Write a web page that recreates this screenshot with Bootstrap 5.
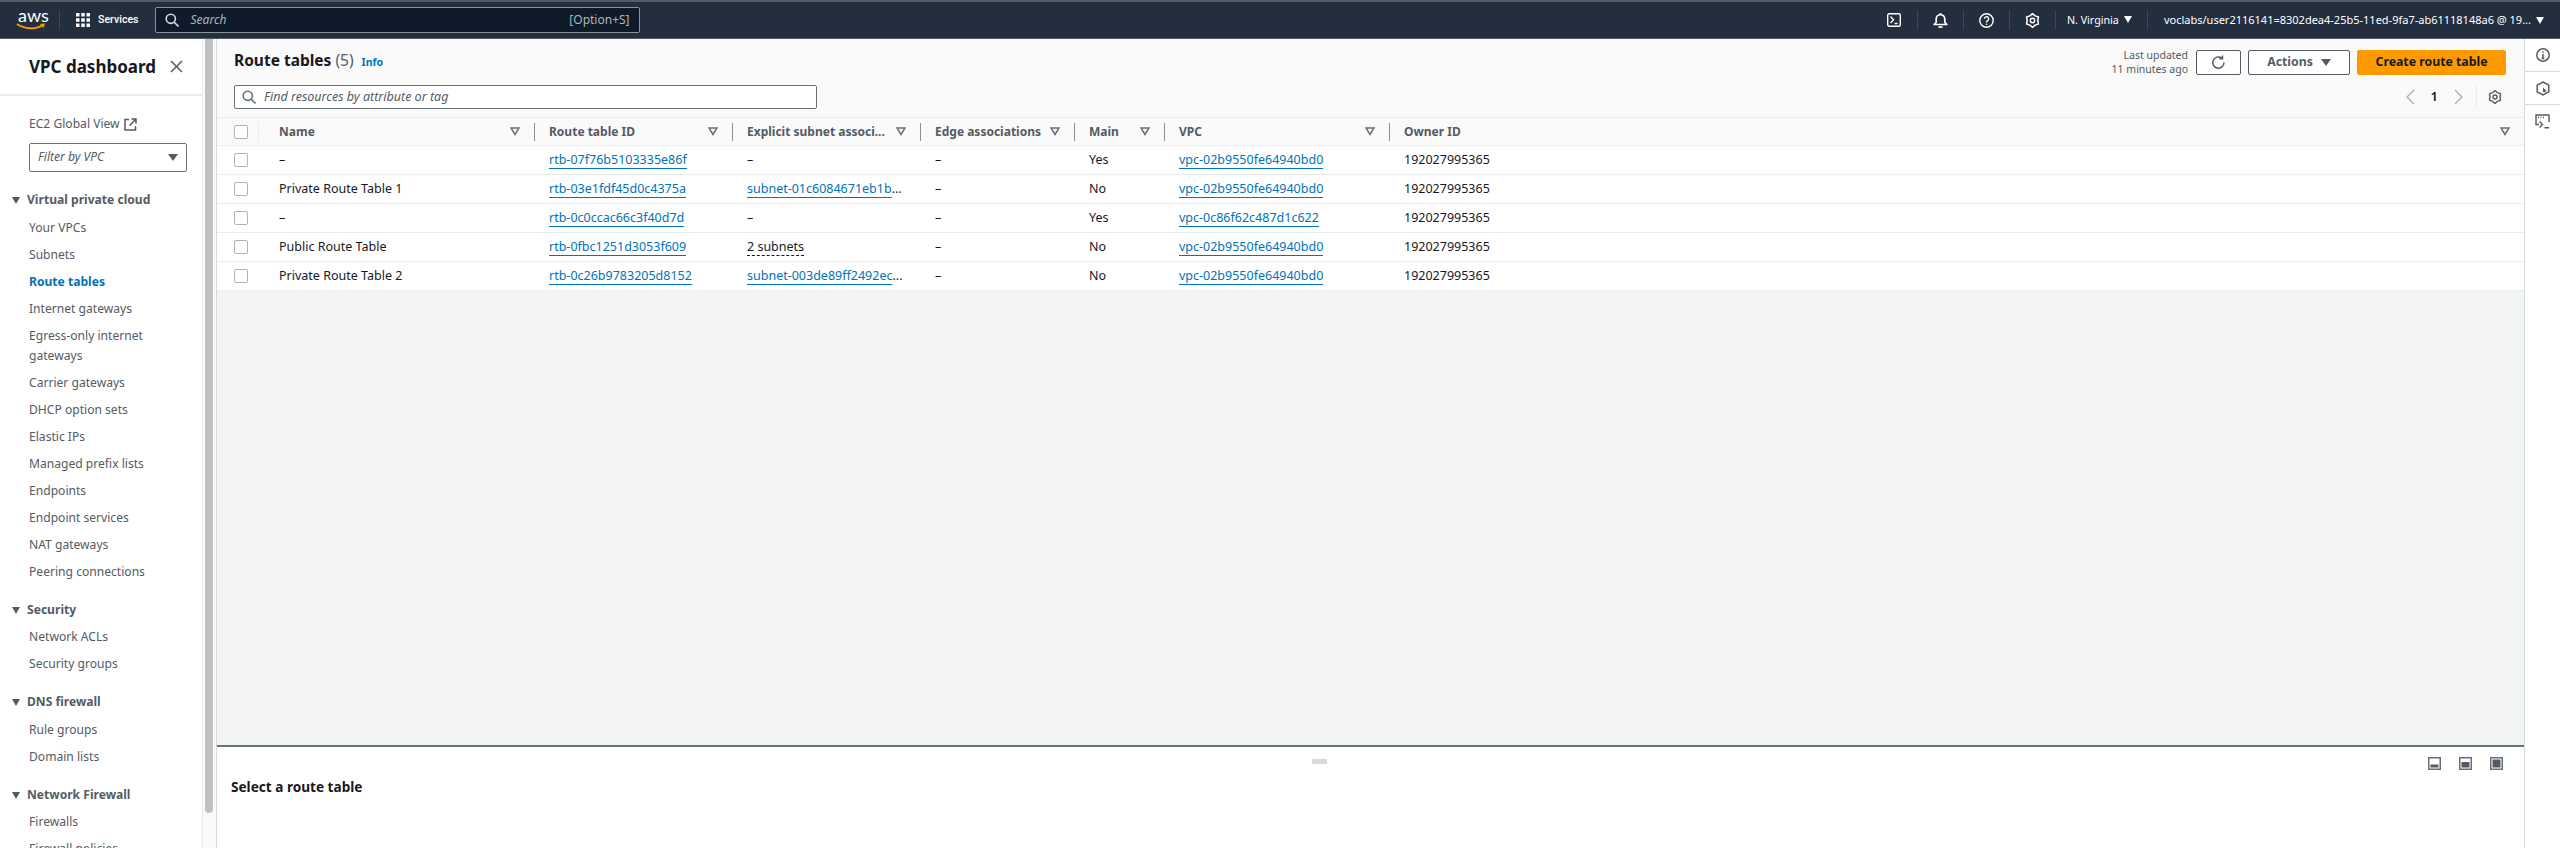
<!DOCTYPE html>
<html lang="en">
<head>
    <meta charset="UTF-8">
    <meta name="viewport" content="width=device-width, initial-scale=1.0">
    <title>Route tables | VPC Console</title>
    <link href="https://cdn.jsdelivr.net/npm/bootstrap@5.3.0/dist/css/bootstrap.min.css" rel="stylesheet">
    <style>
        html, body {
            height: 848px;
            overflow: hidden;
        }
        body {
            font-family: "Noto Sans", "Liberation Sans", sans-serif;
            font-size: 12.5px;
            color: #16191f;
            background: #fff;
        }
        /* top bar */
        .topbar {
            height: 39px;
            background: #232f3e;
            border-top: 2px solid #545b64;
            border-bottom: 1px solid #545b64;
            color: #fff;
            flex: none;
        }
        .aws-logo {
            width: 30px;
            margin: 0 13px 0 16px;
            flex: none;
        }
        .aws-word {
            font: 400 18px/13px Lato, sans-serif;
            display: block;
            margin-left: 2px;
            height: 14px;
        }
        .bar-sep {
            width: 1px;
            height: 20px;
            background: #414750;
            flex: none;
        }
        .services {
            font-family: Roboto, sans-serif;
            font-size: 10.6px;
            font-weight: 500;
            margin-left: 8px;
        }
        .top-search {
            width: 485px;
            height: 26px;
            margin-left: 16px;
            background: #0f1b2a;
            border: 1px solid #879596;
            border-radius: 2px;
            padding: 0 9px;
            color: #aab7b8;
            font-size: 12px;
        }
        .top-right {
            margin-left: auto;
        }
        .top-icon {
            width: 45px;
            display: flex;
            justify-content: center;
        }
        .region {
            font-size: 10.7px;
            width: 91px;
            padding-left: 11px;
        }
        .account {
            font-size: 11px;
            padding: 0 16px;
            white-space: nowrap;
        }
        .mini-caret {
            display: inline-block;
            border-left: 4px solid transparent;
            border-right: 4px solid transparent;
            border-top: 7px solid currentColor;
            margin-left: 5px;
        }
        .big-caret {
            border-left-width: 5px;
            border-right-width: 5px;
        }
        /* shell */
        .shell {
            height: 809px;
            min-height: 0;
        }
        .side-nav {
            width: 203px;
            flex: none;
            overflow: hidden;
            border-right: 1px solid #eaeded;
            color: #545b64;
            font-size: 12.1px;
        }
        .side-head {
            height: 57px;
            padding: 0 19px 0 29px;
            border-bottom: 2px solid #eaeded;
            font-size: 17px;
            font-weight: 700;
            color: #16191f;
        }
        .ec2-link {
            margin: 18px 0 0 29px;
            line-height: 20px;
        }
        .vpc-filter {
            width: 158px;
            height: 29px;
            margin: 9px 0 0 29px;
            border: 1px solid #687078;
            border-radius: 2px;
            padding: 0 8px;
            font-style: italic;
            color: #545b64;
        }
        .nav-group {
            margin-top: 18px;
        }
        .nav-group + .nav-group {
            margin-top: 14.5px;
        }
        .nav-title {
            font-weight: 700;
            line-height: 20px;
            padding-left: 12px;
            margin-bottom: 4px;
        }
        .nav-title .mini-caret {
            border-left-width: 4.5px;
            border-right-width: 4.5px;
            margin: 0 7px 0 0;
        }
        .nav-item-link {
            display: block;
            padding: 3.5px 10px 3.5px 29px;
            line-height: 20px;
            color: #545b64;
            text-decoration: none;
        }
        .nav-item-link.active-item {
            color: #0073bb;
            font-weight: 700;
        }
        .scroll-gutter {
            width: 13px;
            flex: none;
            background: #fafafa;
            padding: 0 3px 0 2px;
        }
        .scroll-thumb {
            height: 774px;
            background: #c1c1c1;
            border-radius: 0 0 4px 4px;
        }
        .main-area {
            min-width: 0;
            border-left: 1px solid #d5dbdb;
        }
        .table-zone {
            height: 708px;
            flex: none;
            background: #f2f3f3;
            border-bottom: 2px solid #687078;
        }
        .res-head {
            height: 78px;
            background: #fafafa;
            padding: 10px 18px 0 17px;
        }
        .res-title {
            font-size: 15.5px;
            font-weight: 700;
            line-height: 22px;
            margin: 0;
        }
        .res-title .count {
            font-weight: 400;
            color: #545b64;
        }
        .info-link {
            font-size: 10.5px;
            font-weight: 700;
            color: #0073bb;
            margin-left: 8px;
            text-decoration: none;
        }
        .find-box {
            width: 583px;
            height: 24px;
            margin-top: 12px;
            background: #fff;
            border: 1px solid #687078;
            border-radius: 2px;
            padding: 0 7px;
            font-style: italic;
            color: #545b64;
        }
        .updated {
            font-size: 10.5px;
            line-height: 14px;
            color: #545b64;
            text-align: right;
            margin-right: 8px;
        }
        .head-actions {
            margin-top: -1px;
        }
        .aws-btn {
            height: 25px;
            border: 1px solid #545b64;
            border-radius: 2px;
            background: #fff;
            color: #545b64;
            font-weight: 700;
            font-size: 12.3px;
            display: flex;
            align-items: center;
            justify-content: center;
            padding: 0;
        }
        .btn-refresh {
            width: 45px;
        }
        .btn-actions {
            width: 102px;
            margin-left: 7px;
        }
        .btn-create {
            width: 149px;
            margin-left: 7px;
            background: #f90;
            border-color: #f90;
            color: #16191f;
        }
        .pager {
            height: 24px;
            margin-top: 9px;
            font-size: 13px;
            font-weight: 600;
        }
        .pager-sep {
            width: 1px;
            height: 24px;
            background: #eaeded;
            margin: 0 11px 0 13px;
        }
        .route-table {
            table-layout: fixed;
            width: 2307px;
            margin: 0;
            border-collapse: collapse;
            color: #16191f;
        }
        .route-table th {
            height: 28px;
            padding: 0;
            background: #fafafa;
            color: #545b64;
            font-size: 12px;
            font-weight: 700;
            border-top: 1px solid #eaeded;
            border-bottom: 1px solid #eaeded;
            vertical-align: middle;
        }
        .route-table td {
            height: 29px;
            padding: 0 0 0 15px;
            border-bottom: 1px solid #eaeded;
            vertical-align: middle;
            background: #fff;
            white-space: nowrap;
            overflow: hidden;
        }
        .route-table .check-col {
            padding: 0 0 0 17px;
        }
        .route-table .name-td {
            padding-left: 21px;
        }
        .head-cell {
            height: 18px;
            padding: 0 14px 0 14px;
            border-left: 1px solid #879596;
        }
        .head-cell.first-cell {
            border-left-color: #eaeded;
            padding-left: 20px;
        }
        .filter-mark {
            margin-left: auto;
            flex: none;
        }
        .fake-check {
            display: block;
            width: 14px;
            height: 14px;
            background: #fff;
            border: 1px solid #aab7b8;
            border-radius: 2px;
        }
        .res-link {
            color: #0073bb;
            text-decoration: none;
            border-bottom: 1px solid #0073bb;
        }
        .dash-under {
            border-bottom: 1px dashed #16191f;
        }
        .split-handle {
            height: 5px;
            width: 15px;
            background: #d5dbdb;
            position: absolute;
            left: 1095px;
            top: 12px;
        }
        .detail-zone {
            position: relative;
            padding: 10px 21px 0 14px;
        }
        .detail-icons {
            gap: 18px;
        }
        .detail-title {
            font-size: 13.6px;
            font-weight: 700;
            margin-top: 7px;
        }
        .right-rail {
            width: 36px;
            flex: none;
            border-left: 1px solid #d5dbdb;
            background: #fff;
        }
        .rail-btn {
            height: 33px;
            border-bottom: 1px solid #d5dbdb;
        }
        .rail-btn:last-child {
            border-bottom: 0;
        }
    </style>
</head>
<body class="d-flex flex-column">
<header class="topbar d-flex align-items-center">
    <div class="aws-logo">
        <span class="aws-word">aws</span>
        <svg width="30" height="8" viewBox="0 0 30 8" class="d-block"><path d="M1 1c7 5 19 6 26 1" fill="none" stroke="#f90" stroke-width="1.800"/><path d="M24 1l5-.5-1.500 4.500z" fill="#f90"/></svg>
    </div>
    <div class="bar-sep"></div>
    <svg width="14" height="14" viewBox="0 0 14 14" class="ms-3 flex-shrink-0" fill="#fff"><rect width="3.500" height="3.500"/><rect x="5.250" width="3.500" height="3.500"/><rect x="10.500" width="3.500" height="3.500"/><rect y="5.250" width="3.500" height="3.500"/><rect x="5.250" y="5.250" width="3.500" height="3.500"/><rect x="10.500" y="5.250" width="3.500" height="3.500"/><rect y="10.500" width="3.500" height="3.500"/><rect x="5.250" y="10.500" width="3.500" height="3.500"/><rect x="10.500" y="10.500" width="3.500" height="3.500"/></svg>
    <span class="services">Services</span>
    <div class="top-search d-flex align-items-center">
        <svg width="14" height="14" viewBox="0 0 14 14" fill="none" stroke="#d5dbdb" stroke-width="1.600"><circle cx="5.800" cy="5.800" r="4.600"/><path d="M9.200 9.200l4.300 4.300"/></svg>
        <em class="ms-2 ps-1">Search</em>
        <span class="ms-auto">[Option+S]</span>
    </div>
    <div class="top-right d-flex align-items-center">
        <div class="top-icon"><svg width="14" height="14" viewBox="0 0 14 14" fill="none" stroke="#fff" stroke-width="1.400"><rect x=".7" y=".7" width="12.600" height="12.600" rx="1.500"/><path d="M3.500 3.500l3 3.200-3 3.300M7.500 10.500h3"/></svg></div>
        <div class="bar-sep"></div>
        <div class="top-icon"><svg width="15" height="15" viewBox="0 0 15 15" fill="none" stroke="#fff" stroke-width="1.700"><path d="M1.200 11.500h12.600l-2-2.300V6a4.300 4.300 0 0 0-8.600 0v3.200z" stroke-linejoin="round"/><path d="M5.500 14h4"/><path d="M7.500 0v2"/></svg></div>
        <div class="bar-sep"></div>
        <div class="top-icon"><svg width="15" height="15" viewBox="0 0 15 15" fill="none" stroke="#fff" stroke-width="1.400"><circle cx="7.500" cy="7.500" r="6.700"/><path d="M5.400 5.800a2.100 2.100 0 1 1 3.200 1.800c-.8.500-1.100 1-1.100 1.900"/><path d="M7.500 10.600v1.300"/></svg></div>
        <div class="bar-sep"></div>
        <div class="top-icon"><svg width="15" height="15" viewBox="0 0 24 24" fill="none" stroke="#fff" stroke-width="2.400" stroke-linejoin="round"><circle cx="12" cy="12" r="3.500"/><path d="M12 1l4.250 3.640 5.250 1.860-1 5.500 1 5.500-5.250 1.860L12 23l-4.250-3.640-5.250-1.860 1-5.500-1-5.500 5.250-1.860z"/></svg></div>
        <div class="bar-sep"></div>
        <div class="region d-flex align-items-center">N. Virginia<span class="mini-caret"></span></div>
        <div class="bar-sep"></div>
        <div class="account d-flex align-items-center">voclabs/user2116141=8302dea4-25b5-11ed-9fa7-ab61118148a6 @ 19...<span class="mini-caret"></span></div>
    </div>
</header>

<div class="shell d-flex">
    <nav class="side-nav">
        <div class="side-head d-flex align-items-center justify-content-between">
            <span>VPC dashboard</span>
            <svg width="13" height="13" viewBox="0 0 13 13" fill="none" stroke="#545b64" stroke-width="1.500"><path d="M1 1l11 11M12 1L1 12"/></svg>
        </div>
        <div class="ec2-link d-flex align-items-center gap-1">EC2 Global View
            <svg width="13" height="13" viewBox="0 0 13 13" fill="none" stroke="#545b64" stroke-width="1.500"><path d="M5 1.500H1v10.500h10.500V8M7.500 1h4.500v4.500M12 1L5.500 7.500"/></svg>
        </div>
        <div class="vpc-filter d-flex align-items-center justify-content-between">Filter by VPC<span class="mini-caret big-caret"></span></div>

        <div class="nav-group">
            <div class="nav-title"><span class="mini-caret"></span>Virtual private cloud</div>
            <a class="nav-item-link" href="#">Your VPCs</a>
            <a class="nav-item-link" href="#">Subnets</a>
            <a class="nav-item-link active-item" href="#">Route tables</a>
            <a class="nav-item-link" href="#">Internet gateways</a>
            <a class="nav-item-link" href="#">Egress-only internet gateways</a>
            <a class="nav-item-link" href="#">Carrier gateways</a>
            <a class="nav-item-link" href="#">DHCP option sets</a>
            <a class="nav-item-link" href="#">Elastic IPs</a>
            <a class="nav-item-link" href="#">Managed prefix lists</a>
            <a class="nav-item-link" href="#">Endpoints</a>
            <a class="nav-item-link" href="#">Endpoint services</a>
            <a class="nav-item-link" href="#">NAT gateways</a>
            <a class="nav-item-link" href="#">Peering connections</a>
        </div>
        <div class="nav-group">
            <div class="nav-title"><span class="mini-caret"></span>Security</div>
            <a class="nav-item-link" href="#">Network ACLs</a>
            <a class="nav-item-link" href="#">Security groups</a>
        </div>
        <div class="nav-group">
            <div class="nav-title"><span class="mini-caret"></span>DNS firewall</div>
            <a class="nav-item-link" href="#">Rule groups</a>
            <a class="nav-item-link" href="#">Domain lists</a>
        </div>
        <div class="nav-group">
            <div class="nav-title"><span class="mini-caret"></span>Network Firewall</div>
            <a class="nav-item-link" href="#">Firewalls</a>
            <a class="nav-item-link" href="#">Firewall policies</a>
        </div>
    </nav>
    <div class="scroll-gutter"><div class="scroll-thumb"></div></div>

    <main class="main-area flex-grow-1 d-flex flex-column">
        <section class="table-zone">
            <div class="res-head d-flex justify-content-between">
                <div>
                    <h1 class="res-title">Route tables <span class="count">(5)</span><a class="info-link" href="#">Info</a></h1>
                    <div class="find-box d-flex align-items-center">
                        <svg width="14" height="14" viewBox="0 0 14 14" fill="none" stroke="#687078" stroke-width="1.600"><circle cx="5.800" cy="5.800" r="4.600"/><path d="M9.200 9.200l4.300 4.300"/></svg>
                        <span class="ms-2">Find resources by attribute or tag</span>
                    </div>
                </div>
                <div class="head-actions">
                    <div class="d-flex align-items-center">
                        <div class="updated">Last updated<br>11 minutes ago</div>
                        <button class="aws-btn btn-refresh" type="button"><svg width="15" height="15" viewBox="0 0 15 15" fill="none" stroke="#545b64" stroke-width="1.500"><path d="M13 7.500a5.600 5.600 0 1 1-2.300-4.500"/><path d="M11.500.5v3.200H8.300"/></svg></button>
                        <button class="aws-btn btn-actions" type="button">Actions<span class="mini-caret big-caret ms-2"></span></button>
                        <button class="aws-btn btn-create" type="button">Create route table</button>
                    </div>
                    <div class="pager d-flex align-items-center justify-content-end">
                        <svg width="9" height="16" viewBox="0 0 9 16" fill="none" stroke="#aab7b8" stroke-width="1.500"><path d="M8 1L1 8l7 7"/></svg>
                        <span class="mx-3">1</span>
                        <svg width="9" height="16" viewBox="0 0 9 16" fill="none" stroke="#aab7b8" stroke-width="1.500"><path d="M1 1l7 7-7 7"/></svg>
                        <span class="pager-sep"></span>
                        <svg width="14" height="14" viewBox="0 0 24 24" fill="none" stroke="#545b64" stroke-width="2.400" stroke-linejoin="round" class="me-1"><circle cx="12" cy="12" r="3.500"/><path d="M12 1l4.250 3.640 5.250 1.860-1 5.500 1 5.500-5.250 1.860L12 23l-4.250-3.640-5.250-1.860 1-5.500-1-5.500 5.250-1.860z"/></svg>
                    </div>
                </div>
            </div>
            <table class="route-table">
                <colgroup>
                    <col style="width:41px"><col style="width:276px"><col style="width:198px"><col style="width:188px"><col style="width:154px"><col style="width:90px"><col style="width:225px"><col>
                </colgroup>
                <thead>
                    <tr>
                        <th class="check-col"><span class="fake-check"></span></th>
                        <th><div class="head-cell first-cell d-flex align-items-center">Name<svg class="filter-mark" width="10" height="9" viewBox="0 0 10 9" fill="none" stroke="#687078" stroke-width="1.500"><path d="M1 1h8L5 7.500z"/></svg></div></th>
                        <th><div class="head-cell d-flex align-items-center">Route table ID<svg class="filter-mark" width="10" height="9" viewBox="0 0 10 9" fill="none" stroke="#687078" stroke-width="1.500"><path d="M1 1h8L5 7.500z"/></svg></div></th>
                        <th><div class="head-cell d-flex align-items-center">Explicit subnet associ...<svg class="filter-mark" width="10" height="9" viewBox="0 0 10 9" fill="none" stroke="#687078" stroke-width="1.500"><path d="M1 1h8L5 7.500z"/></svg></div></th>
                        <th><div class="head-cell d-flex align-items-center">Edge associations<svg class="filter-mark" width="10" height="9" viewBox="0 0 10 9" fill="none" stroke="#687078" stroke-width="1.500"><path d="M1 1h8L5 7.500z"/></svg></div></th>
                        <th><div class="head-cell d-flex align-items-center">Main<svg class="filter-mark" width="10" height="9" viewBox="0 0 10 9" fill="none" stroke="#687078" stroke-width="1.500"><path d="M1 1h8L5 7.500z"/></svg></div></th>
                        <th><div class="head-cell d-flex align-items-center">VPC<svg class="filter-mark" width="10" height="9" viewBox="0 0 10 9" fill="none" stroke="#687078" stroke-width="1.500"><path d="M1 1h8L5 7.500z"/></svg></div></th>
                        <th><div class="head-cell d-flex align-items-center">Owner ID<svg class="filter-mark" width="10" height="9" viewBox="0 0 10 9" fill="none" stroke="#687078" stroke-width="1.500"><path d="M1 1h8L5 7.500z"/></svg></div></th>
                    </tr>
                </thead>
                <tbody>
                    <tr>
                        <td class="check-col"><span class="fake-check"></span></td>
                        <td class="name-td">–</td>
                        <td><a class="res-link" href="#">rtb-07f76b5103335e86f</a></td>
                        <td>–</td><td>–</td><td>Yes</td>
                        <td><a class="res-link" href="#">vpc-02b9550fe64940bd0</a></td>
                        <td>192027995365</td>
                    </tr>
                    <tr>
                        <td class="check-col"><span class="fake-check"></span></td>
                        <td class="name-td">Private Route Table 1</td>
                        <td><a class="res-link" href="#">rtb-03e1fdf45d0c4375a</a></td>
                        <td><a class="res-link" href="#">subnet-01c6084671eb1b</a>...</td><td>–</td><td>No</td>
                        <td><a class="res-link" href="#">vpc-02b9550fe64940bd0</a></td>
                        <td>192027995365</td>
                    </tr>
                    <tr>
                        <td class="check-col"><span class="fake-check"></span></td>
                        <td class="name-td">–</td>
                        <td><a class="res-link" href="#">rtb-0c0ccac66c3f40d7d</a></td>
                        <td>–</td><td>–</td><td>Yes</td>
                        <td><a class="res-link" href="#">vpc-0c86f62c487d1c622</a></td>
                        <td>192027995365</td>
                    </tr>
                    <tr>
                        <td class="check-col"><span class="fake-check"></span></td>
                        <td class="name-td">Public Route Table</td>
                        <td><a class="res-link" href="#">rtb-0fbc1251d3053f609</a></td>
                        <td><span class="dash-under">2 subnets</span></td><td>–</td><td>No</td>
                        <td><a class="res-link" href="#">vpc-02b9550fe64940bd0</a></td>
                        <td>192027995365</td>
                    </tr>
                    <tr>
                        <td class="check-col"><span class="fake-check"></span></td>
                        <td class="name-td">Private Route Table 2</td>
                        <td><a class="res-link" href="#">rtb-0c26b9783205d8152</a></td>
                        <td><a class="res-link" href="#">subnet-003de89ff2492ec</a>...</td><td>–</td><td>No</td>
                        <td><a class="res-link" href="#">vpc-02b9550fe64940bd0</a></td>
                        <td>192027995365</td>
                    </tr>
                </tbody>
            </table>
        </section>
        <section class="detail-zone flex-grow-1">
            <div class="split-handle"></div>
            <div class="detail-icons d-flex justify-content-end">
                <svg width="13" height="13" viewBox="0 0 13 13"><rect x=".75" y=".75" width="11.500" height="11.500" fill="none" stroke="#687078" stroke-width="1.500"/><rect x="2.500" y="7.500" width="8" height="3" fill="#545b64"/></svg>
                <svg width="13" height="13" viewBox="0 0 13 13"><rect x=".75" y=".75" width="11.500" height="11.500" fill="none" stroke="#687078" stroke-width="1.500"/><rect x="2.500" y="5" width="8" height="5.500" fill="#545b64"/></svg>
                <svg width="13" height="13" viewBox="0 0 13 13"><rect x=".75" y=".75" width="11.500" height="11.500" fill="none" stroke="#687078" stroke-width="1.500"/><rect x="2.500" y="2.500" width="8" height="8" fill="#545b64"/></svg>
            </div>
            <div class="detail-title">Select a route table</div>
        </section>
    </main>

    <aside class="right-rail">
        <div class="rail-btn d-flex align-items-center justify-content-center"><svg width="14" height="14" viewBox="0 0 14 14" fill="none" stroke="#545b64" stroke-width="1.500"><circle cx="7" cy="7" r="6.200"/><path d="M7 6v4.500M5.500 10.500h3M7 3.200v1.500"/></svg></div>
        <div class="rail-btn d-flex align-items-center justify-content-center"><svg width="14" height="15" viewBox="0 0 14 15" fill="none" stroke="#545b64" stroke-width="1.500"><path d="M7 1l5.800 3.200v6.600L7 14l-5.800-3.200V4.200z"/><path d="M7 6.500l3.500 3.500-1.800 1.200-1.700-.2z" fill="#545b64" stroke="none"/></svg></div>
        <div class="rail-btn d-flex align-items-center justify-content-center"><svg width="15" height="15" viewBox="0 0 15 15" fill="none" stroke="#545b64" stroke-width="1.400"><path d="M4 10.500H1V1h13v7"/><path d="M3 3.500h1M5.500 3.500h1M8 3.500h1"/><path d="M4.500 7.500l3 3-3 3M9.500 13.800h4.500"/></svg></div>
    </aside>
</div>
<script src="https://cdn.jsdelivr.net/npm/bootstrap@5.3.0/dist/js/bootstrap.bundle.min.js"></script>
</body>
</html>
